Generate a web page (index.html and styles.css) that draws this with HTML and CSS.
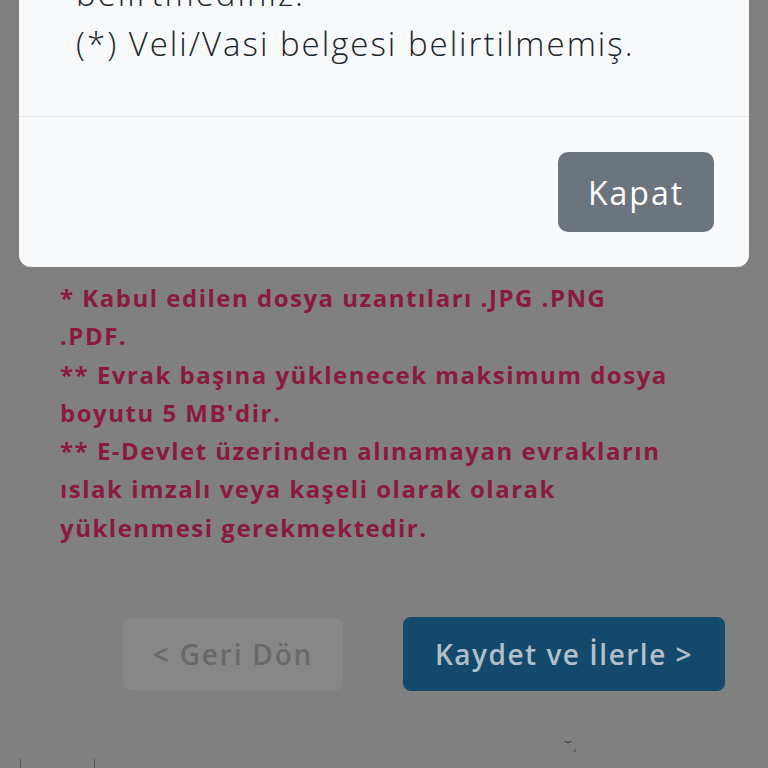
FILE: index.html
```html
<!DOCTYPE html>
<html lang="tr">
<head>
<meta charset="utf-8">
<title>Evrak Yükleme</title>
<link rel="stylesheet" href="styles.css">
</head>
<body>
<main class="page">
  <section class="notes">
    <p>* Kabul edilen dosya uzantıları .JPG .PNG<br>.PDF.</p>
    <p>** Evrak başına yüklenecek maksimum dosya<br>boyutu 5 MB'dir.</p>
    <p>** E-Devlet üzerinden alınamayan evrakların<br>ıslak imzalı veya kaşeli olarak olarak<br>yüklenmesi gerekmektedir.</p>
  </section>
  <div class="actions">
    <button class="btn btn-back" disabled>&lt; Geri Dön</button>
    <button class="btn btn-next">Kaydet ve İlerle &gt;</button>
  </div>
  <div class="below">
    <div class="box"></div>
    <svg class="spinner" width="20" height="18" viewBox="0 0 20 18"><path d="M3 4 Q6 7 9 4" fill="none" stroke="#4a4a4a" stroke-width="1.4"/><path d="M14 12 L12 15" fill="none" stroke="#5a5a5a" stroke-width="1.4"/></svg>
  </div>
</main>
<div class="modal">
  <div class="modal-body">
    <p>belirtmediniz.</p>
    <p>(*) Veli/Vasi belgesi belirtilmemiş.</p>
  </div>
  <div class="modal-footer">
    <button class="btn btn-close">Kapat</button>
  </div>
</div>
</body>
</html>
```
FILE: styles.css
```css
html, body {
  margin: 0;
  padding: 0;
  height: 100%;
  overflow: hidden;
}
body {
  background: #808080;
  font-family: "Open Sans", "DejaVu Sans", sans-serif;
}
.page {
  padding-top: 279px;
}
.notes {
  padding: 0 60px;
  color: #8a1a3e;
  font-weight: 700;
  font-size: 24px;
  line-height: 38.3px;
  letter-spacing: 1.5px;
}
.notes p {
  margin: 0;
}
.actions {
  display: flex;
  justify-content: flex-end;
  gap: 60px;
  padding: 70px 43px 0 0;
}
.btn {
  border: none;
  font-family: inherit;
  cursor: pointer;
}
.btn-back {
  width: 220px;
  height: 72px;
  margin-top: 1px;
  border-radius: 8px;
  background: #878787;
  color: #696969;
  font-size: 28px;
  font-weight: 600;
  letter-spacing: 1.8px;
}
.btn-next {
  width: 322px;
  height: 74px;
  border-radius: 8px;
  background: #134a6b;
  color: #b2bfca;
  font-size: 28px;
  font-weight: 600;
  letter-spacing: 1.5px;
}
.below {
  display: flex;
  align-items: flex-start;
  padding: 46px 0 0 20px;
}
.box {
  width: 73px;
  height: 30px;
  margin-top: 22px;
  border-left: 1px solid #555;
  border-right: 1px solid #555;
}
.spinner {
  margin-left: 467px;
}
.modal {
  position: fixed;
  left: 19px;
  right: 19px;
  bottom: 501px;
  background: #f8f9fa;
  border-radius: 0 0 12px 12px;
}
.modal-body {
  padding: 0 57px 47px;
  color: #212529;
  font-size: 33px;
  font-weight: 300;
  line-height: 50px;
  letter-spacing: 2px;
}
.modal-body p {
  margin: 0;
}
.modal-footer {
  display: flex;
  justify-content: flex-end;
  padding: 35px;
  border-top: 1px solid #e4e6e9;
}
.btn-close {
  width: 156px;
  height: 80px;
  border-radius: 10px;
  background: #6c757d;
  color: #ffffff;
  font-size: 32px;
  font-weight: 400;
  letter-spacing: 2px;
}
```
